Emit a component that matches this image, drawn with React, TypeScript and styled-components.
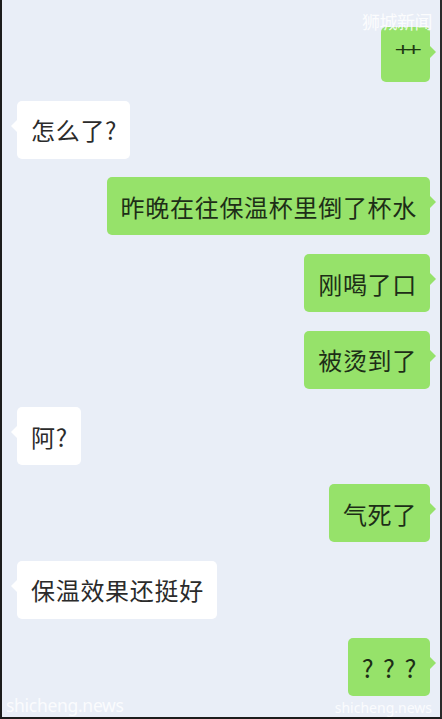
import styled, { createGlobalStyle } from "styled-components";

type Side = "me" | "them";

type Message = {
  side: Side;
  text: string;
  short?: boolean;
  spaced?: boolean;
};

const messages: Message[] = [
  { side: "me", text: "++", short: true },
  { side: "them", text: "怎么了?" },
  { side: "me", text: "昨晚在往保温杯里倒了杯水" },
  { side: "me", text: "刚喝了口" },
  { side: "me", text: "被烫到了" },
  { side: "them", text: "阿?" },
  { side: "me", text: "气死了" },
  { side: "them", text: "保温效果还挺好" },
  { side: "me", text: "? ? ?", spaced: true },
];

const GlobalStyle = createGlobalStyle`
  html, body {
    margin: 0;
    padding: 0;
    background: #ffffff;
  }
  * {
    box-sizing: border-box;
  }
`;

const App: React.FC = () => {
  return (
    <>
      <GlobalStyle />
      <Frame>
        <Chat>
          {messages.map((m, i) => (
            <Row key={i} $side={m.side}>
              <Bubble $side={m.side} $short={m.short} $spaced={m.spaced}>
                {m.short ? <Small>{m.text}</Small> : m.text}
              </Bubble>
            </Row>
          ))}
        </Chat>
        <TopMark>狮城新闻</TopMark>
        <BottomMark $side="them">shicheng.news</BottomMark>
        <BottomMark $side="me">shicheng.news</BottomMark>
      </Frame>
    </>
  );
};

export default App;

const Frame = styled.div`
  position: relative;
  width: 442px;
  height: 719px;
  overflow: hidden;
  background: #e9eef7;
  border-left: 2px solid #1c1c1c;
  border-right: 2px solid #2a2a2a;
  border-bottom: 2px solid #1c1c1c;
  font-family: "Noto Sans CJK SC", "Noto Sans", sans-serif;
`;

const Chat = styled.div`
  display: flex;
  flex-direction: column;
  gap: 18.7px;
  padding: 27px 10px 0 15px;
`;

const Row = styled.div<{ $side: Side }>`
  display: flex;
  justify-content: ${(p) => (p.$side === "me" ? "flex-end" : "flex-start")};
`;

const Bubble = styled.div<{ $side: Side; $short?: boolean; $spaced?: boolean }>`
  position: relative;
  height: ${(p) => (p.$short ? "55px" : "58px")};
  display: flex;
  align-items: ${(p) => (p.$short ? "flex-start" : "center")};
  padding: ${(p) => (p.$short ? "14px 13px 0 18px" : "0 13px 0 14px")};
  border-radius: 5px;
  font-size: ${(p) => (p.$spaced ? "25px" : "24px")};
  letter-spacing: 0.7px;
  word-spacing: ${(p) => (p.$spaced ? "2.5px" : "0")};
  white-space: nowrap;
  background: ${(p) => (p.$side === "me" ? "#96e26a" : "#ffffff")};
  color: ${(p) => (p.$side === "me" ? "#1d2e17" : "#2b2b2b")};

  &::after {
    content: "";
    position: absolute;
    top: 19px;
    ${(p) => (p.$side === "me" ? "right: -6px;" : "left: -6px;")}
    border-top: 6px solid transparent;
    border-bottom: 6px solid transparent;
    ${(p) =>
      p.$side === "me"
        ? "border-left: 6px solid #96e26a;"
        : "border-right: 6px solid #ffffff;"}
  }
`;

const Small = styled.span`
  font-family: "DejaVu Sans", sans-serif;
  font-size: 14px;
  letter-spacing: -5px;
  padding-right: 5px;
  color: #1f3a12;
  transform: scaleX(1.6);
  display: inline-block;
`;

const TopMark = styled.div`
  position: absolute;
  top: 8px;
  right: 8px;
  font-size: 18px;
  color: rgba(255, 255, 255, 0.85);
  letter-spacing: -0.5px;
`;

const BottomMark = styled.div<{ $side: Side }>`
  position: absolute;
  bottom: 0;
  font-family: "Noto Sans", sans-serif;
  color: rgba(255, 255, 255, 0.8);
  ${(p) =>
    p.$side === "them"
      ? "left: 4px; font-size: 17.5px; letter-spacing: -0.3px;"
      : "right: 8px; font-size: 14px;"}
`;
